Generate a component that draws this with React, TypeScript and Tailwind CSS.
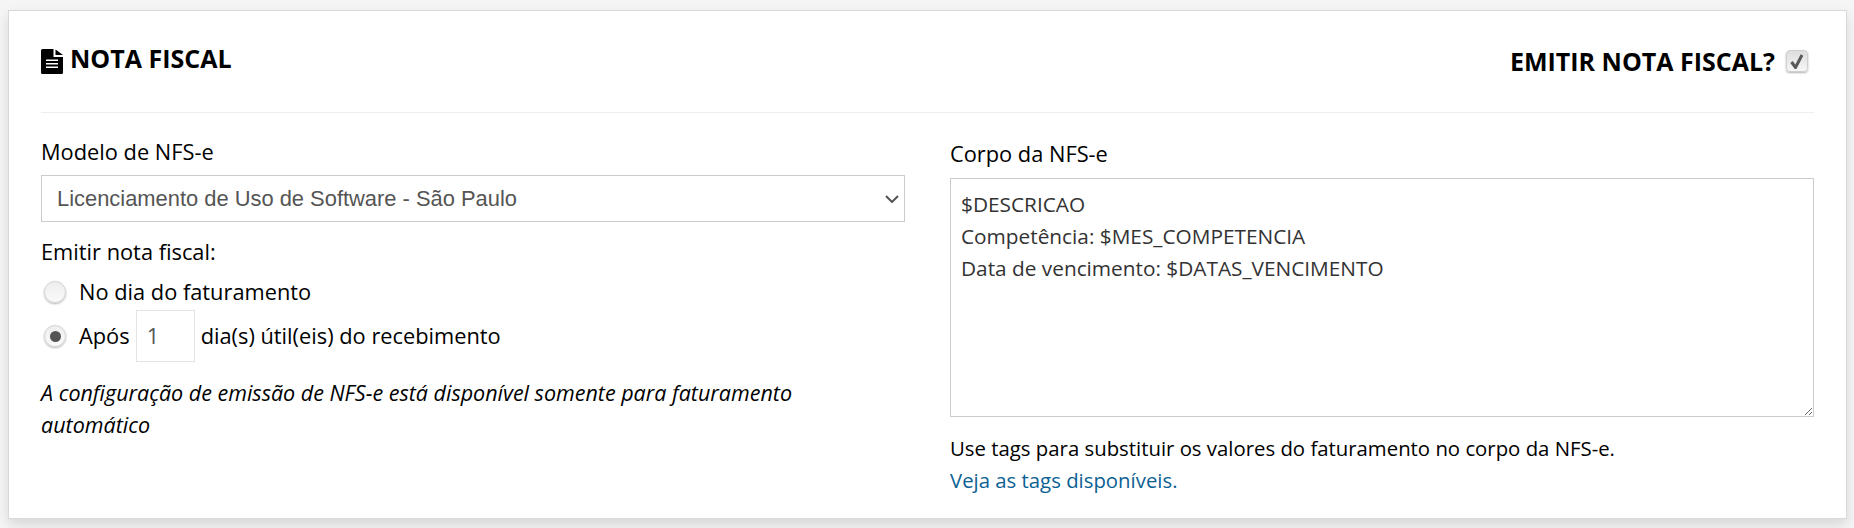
import React from "react";

function Radio({ checked }: { checked?: boolean }) {
  return (
    <span className="flex h-[22px] w-[22px] shrink-0 items-center justify-center rounded-full border border-[#d4d4d4] bg-gradient-to-b from-[#eeeeee] to-[#fafafa] shadow-[0_1px_2px_rgba(0,0,0,0.3)]">
      {checked ? <span className="h-[11px] w-[11px] rounded-full bg-[#555555]" /> : null}
    </span>
  );
}

export default function App() {
  const font = { fontFamily: '"Open Sans", sans-serif' };
  return (
    <div className="h-[528px] bg-[#f5f5f5] pl-2 pr-[7px] pt-[10px] text-[21.8px] text-black" style={font}>
      <div className="h-[509px] border border-[#d9d9d9] bg-white px-8 pt-[31px] shadow-[0_6px_12px_rgba(0,0,0,0.12)]">
        <div className="flex h-[71px] items-start justify-between border-b border-[#eeeeee]">
          <div className="flex items-center gap-[7px]">
            <svg width="22" height="25" viewBox="0 0 22 25" className="mt-[6px]">
              <path fill="#000" d="M1.5 0H12.5V8H22V23.5A1.5 1.5 0 0 1 20.5 25H1.5A1.5 1.5 0 0 1 0 23.5V1.5A1.5 1.5 0 0 1 1.5 0Z" />
              <path fill="#000" d="M14.5 0.5L22 6H14.5Z" />
              <path fill="#fff" d="M5 10.5H17V12.1H5ZM5 14H17V15.6H5ZM5 17.5H17V19.1H5Z" />
            </svg>
            <span className="text-[25px] font-bold leading-[32px]">NOTA FISCAL</span>
          </div>
          <div className="mr-[6px] mt-[3px] flex items-center gap-[11px]">
            <span className="text-[25px] font-bold leading-[32px]">EMITIR NOTA FISCAL?</span>
            <span className="flex h-[22px] w-[22px] items-center justify-center rounded-[4px] border border-[#cfcfcf] bg-gradient-to-b from-[#dddddd] to-[#f7f7f7] shadow-[0_1px_2px_rgba(0,0,0,0.3)]">
              <svg width="14" height="15" viewBox="0 0 14 15">
                <path d="M1.5 8L5.5 13.5L12 1" fill="none" stroke="#5a5a5a" strokeWidth="3" />
              </svg>
            </span>
          </div>
        </div>

        <div className="mt-[20px] flex gap-[45px]">
          <div className="flex-1">
            <div className="mt-[3px] leading-[32px]">Modelo de NFS-e</div>
            <div className="relative mt-[7px]">
              <select
                defaultValue="a"
                className="block h-[47px] w-full appearance-none border border-[#cccccc] bg-white pl-[15px] pr-8 pt-[2px] text-[21.9px] text-[#555555]"
                style={{ fontFamily: '"Liberation Sans", sans-serif' }}
              >
                <option value="a">Licenciamento de Uso de Software - São Paulo</option>
              </select>
              <svg width="14" height="8" viewBox="0 0 14 8" className="pointer-events-none absolute right-[6px] top-[20px]">
                <path d="M1 1L7 7L13 1" fill="none" stroke="#555555" strokeWidth="2" />
              </svg>
            </div>
            <div className="mt-[14px] leading-[32px]">Emitir nota fiscal:</div>
            <div className="mt-[8px] flex items-center gap-[13px] pl-[3px] leading-[32px]">
              <Radio />
              <span>No dia do faturamento</span>
            </div>
            <div className="mt-[2px] flex items-center pl-[3px] leading-[32px]">
              <Radio checked />
              <span className="ml-[13px]">Após</span>
              <span className="ml-[6px] flex h-[52px] w-[59px] items-center border border-[#e3e3e3] pl-[10px] text-[#555555]">1</span>
              <span className="ml-[6px]">dia(s) útil(eis) do recebimento</span>
            </div>
            <p className="mt-[15px] max-w-[830px] text-[21.5px] leading-[32px] italic">
              A configuração de emissão de NFS-e está disponível somente para faturamento automático
            </p>
          </div>
          <div className="flex-1">
            <div className="mt-[5px] leading-[32px]">Corpo da NFS-e</div>
            <textarea
              className="mt-[8px] block h-[239px] w-full border border-[#cccccc] px-[10px] py-[9px] text-[20.8px] leading-[32px] text-[#333333]"
              defaultValue={"$DESCRICAO\nCompetência: $MES_COMPETENCIA\nData de vencimento: $DATAS_VENCIMENTO"}
            />
            <p className="mt-[15px] text-[20.35px] leading-[32px]">Use tags para substituir os valores do faturamento no corpo da NFS-e.</p>
            <a className="block text-[20.35px] leading-[32px] text-[#0b6193]">Veja as tags disponíveis.</a>
          </div>
        </div>
      </div>
    </div>
  );
}
